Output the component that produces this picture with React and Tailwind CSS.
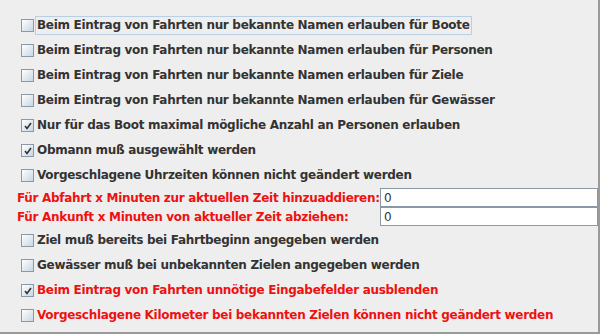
import React from 'react';

const rowsTop = [
  { text: 'Beim Eintrag von Fahrten nur bekannte Namen erlauben für Boote', checked: false, focus: true },
  { text: 'Beim Eintrag von Fahrten nur bekannte Namen erlauben für Personen', checked: false },
  { text: 'Beim Eintrag von Fahrten nur bekannte Namen erlauben für Ziele', checked: false },
  { text: 'Beim Eintrag von Fahrten nur bekannte Namen erlauben für Gewässer', checked: false },
  { text: 'Nur für das Boot maximal mögliche Anzahl an Personen erlauben', checked: true },
  { text: 'Obmann muß ausgewählt werden', checked: true },
  { text: 'Vorgeschlagene Uhrzeiten können nicht geändert werden', checked: false },
];

const rowsBottom = [
  { text: 'Ziel muß bereits bei Fahrtbeginn angegeben werden', checked: false },
  { text: 'Gewässer muß bei unbekannten Zielen angegeben werden', checked: false },
  { text: 'Beim Eintrag von Fahrten unnötige Eingabefelder ausblenden', checked: true, red: true },
  { text: 'Vorgeschlagene Kilometer bei bekannten Zielen können nicht geändert werden', checked: false, red: true },
];

const Box = ({ checked }) => (
  <span className="w-[13px] h-[13px] shrink-0 border border-[#8a99a8] bg-gradient-to-br from-[#ffffff] to-[#c9d6e3] relative">
    {checked && (
      <svg className="absolute left-[1px] top-[1px]" width="10" height="10" viewBox="0 0 10 10">
        <path d="M2 5 L4 7.5 L8 2" stroke="#333333" strokeWidth="1.6" fill="none" />
      </svg>
    )}
  </span>
);

const CheckRow = ({ text, checked, focus, red }) => (
  <div className="h-[25px] flex items-center pl-[21px]">
    <Box checked={checked} />
    <span
      className={`ml-[1px] px-[1px] leading-[17px] whitespace-nowrap border ${focus ? 'border-[#b8cfe5]' : 'border-transparent'} ${red ? 'text-[#ee1111]' : 'text-[#333333]'}`}
    >
      {text}
    </span>
  </div>
);

const FieldRow = ({ label }) => (
  <div className="h-[19px] flex items-center pl-[17px]">
    <span className="w-[363px] shrink-0 whitespace-nowrap text-[#ee1111]">{label}</span>
    <div className="flex-1 h-[19px] bg-white border border-[#8a99a8] flex items-center pl-[3px] font-normal text-[#333333]">
      0
    </div>
  </div>
);

export default function App() {
  return (
    <div
      className="w-[600px] h-[334px] bg-[#eeeeee] border-r-2 border-b-2 border-[#9a9a9a] overflow-hidden text-[12px] font-bold tracking-[-0.3px]"
      style={{ fontFamily: '"DejaVu Sans", sans-serif' }}
    >
      <div className="pt-[13px] flex flex-col">
        {rowsTop.map((r) => (
          <CheckRow key={r.text} {...r} />
        ))}
        <FieldRow label="Für Abfahrt x Minuten zur aktuellen Zeit hinzuaddieren:" />
        <FieldRow label="Für Ankunft x Minuten von aktueller Zeit abziehen:" />
        <div className="mt-[2px] flex flex-col">
          {rowsBottom.map((r) => (
            <CheckRow key={r.text} {...r} />
          ))}
        </div>
      </div>
    </div>
  );
}
